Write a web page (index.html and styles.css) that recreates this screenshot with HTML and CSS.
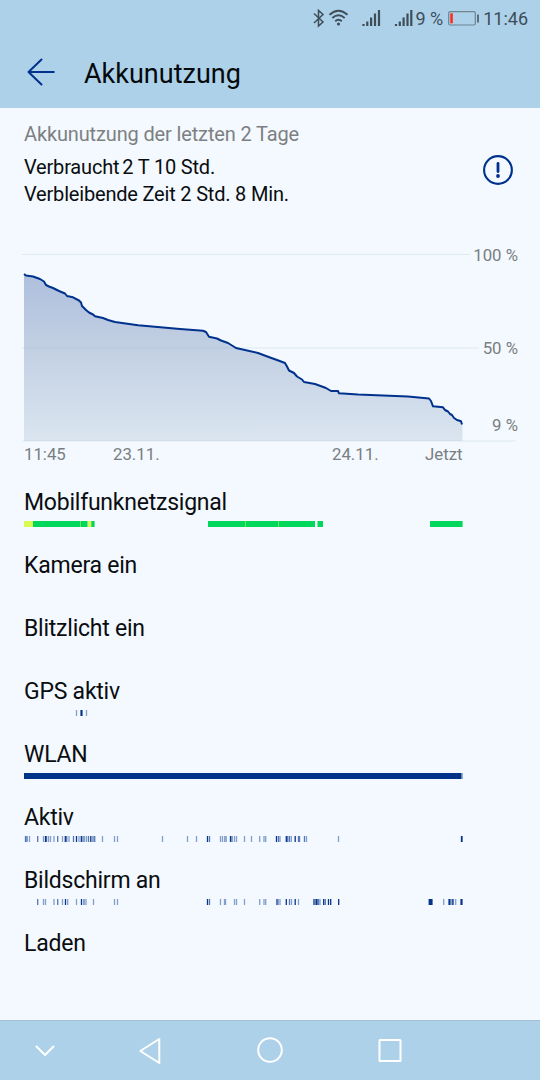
FILE: index.html
```html
<!DOCTYPE html>
<html lang="de">
<head>
<meta charset="utf-8">
<title>Akkunutzung</title>
<link rel="stylesheet" href="styles.css">
</head>
<body>
<header class="top">
  <div class="status">
    <svg class="status-icons" width="102" height="24" viewBox="312 6 102 24">
      <path class="ink" d="M314 13.5l9 8.5-4.5 4V10.5l4.5 4-9 8.5"/>
      <g class="ink wifi"><path d="M329.5 14.8q9-8 18 0"/><path d="M332.3 18q6.2-5.4 12.4 0"/><path d="M335.2 21.2q3.3-2.8 6.6 0"/></g>
      <circle class="ink-fill" cx="338.5" cy="24" r="1.6"/>
      <path class="ink bars" d="M363.5 24v2M367.3 21.5v4.500M371.1 17.500v8.500M375 13.500v12.500M379 10v16"/>
      <path class="ink bars" d="M396 24v2M399.8 21.500v4.500M403.600 17.500v8.500M407.500 13.500v12.500M411.300 10v16"/>
    </svg>
    <span class="charge">9 %</span>
    <svg class="battery" width="31" height="16" viewBox="0 0 31 16">
      <rect class="battery-case" x=".7" y="1.700" width="26.600" height="13.300" rx="1.500"/>
      <path class="battery-level" d="M2.300 3.300h2.500v10h-2.500z"/>
      <path class="ink" d="M30 4.500v8"/>
    </svg>
    <span>11:46</span>
  </div>
  <div class="appbar">
    <svg width="30" height="30" viewBox="0 0 30 30"><path class="back" d="M15.500 2.500L2.500 15l13 12.500M2.500 15h25.300"/></svg>
    <h1>Akkunutzung</h1>
  </div>
</header>
<main>
  <section class="summary">
    <div>
      <p class="caption">Akkunutzung der letzten 2 Tage</p>
      <p class="fact"><span class="used">Verbraucht</span>2 T 10 Std.</p>
      <p class="fact">Verbleibende Zeit 2 Std. 8 Min.</p>
    </div>
    <svg class="info" width="32" height="32" viewBox="0 0 32 32"><circle cx="16" cy="16" r="13.900"/><path d="M16 9.500v8"/><circle class="dot" cx="16" cy="22" r="1.900"/></svg>
  </section>
  <section class="chart">
    <svg class="plot" width="500" height="200" viewBox="20 246 500 200">
      <defs><linearGradient id="fade" x1="0" y1="0" x2="0" y2="1"><stop offset="0" stop-color="#aebfdd"/><stop offset=".5" stop-color="#c5d2e4"/><stop offset="1" stop-color="#dae5f0"/></linearGradient></defs>
      <path class="area" d="M24 441V274.500L33 277 40 279.500 44 281.500 46 285 53 288 61 292 65 294 67 296 73 297.300 80 302 82 306.500 86 310 89 312.500 95 316.300 103 318 115 322 138 325.200 180 329 203 330.800 206 332 209 336.800 217 338.500 228 343 236 348 258 353 270 357.500 285 363 290 371 294 373 298 377.300 304 382 315 384 326 388 331 391 338 391 339 393.300 358 394.500 408 396.500 429 398.500 431 401 433 406.300 443 407.300 445 410 448 411.500 454 418 461 421.300 462.500 425V441z"/>
      <path class="grid" d="M22 254.500H470M22 348H479M22 441H516"/>
      <path class="curve" d="M24 274L26 275.500 33 276.500 40 279 44 281.500 46 285 49 286.500 53 288 59 291 65 293.500 67 296 73 297.300 79 300.500 81 302.500 82 306 86 310 89 312.500 93 314.500 95 316.300 103 318 108 320 115 322 138 325.200 180 329 203 330.800 206 332 209 336.800 217 338.500 221 340.500 228 343 236 348 258 353 270 357.500 277 360 285 363 287 366.500 289 370.500 294 373 297 376.500 302 379.500 304 382 315 384 326 388 331 391 338 391 339 393.300 358 394.500 408 396.500 429 398.500 431 401 433 406.300 443 407.300 445 410 448 411.500 450 414 452 415 454 418 457 420 461 421.300 462 424.500"/>
      <g class="axis"><g text-anchor="end"><text x="518" y="260.500">100 %</text><text x="518" y="354">50 %</text><text x="518" y="430.500">9 %</text></g></g>
    </svg>
    <div class="dates"><span>11:45</span><span>23.11.</span><span>24.11.</span><span>Jetzt</span></div>
  </section>
  <section class="rows">
    <div class="row"><h2>Mobilfunknetzsignal</h2>
      <svg class="strip" viewBox="24 0 439 6"><path fill="#d9fa50" d="M24 0h9v6h-9zM87.500 0h4v6h-4z"/><path fill="#6be654" d="M80 0h1v6h-1zM245 0h1v6h-1zM278 0h1v6h-1z"/><path fill="#00d75b" d="M33 0h47v6H33zM81 0h6.500v6H81zM91.300 0h3.300v6h-3.300zM208 0h37v6h-37zM246 0h32v6h-32zM279 0h36v6h-36zM317.500 0h5.500v6h-5.500zM430 0h32.600v6H430z"/></svg></div>
    <div class="row"><h2>Kamera ein</h2></div>
    <div class="row"><h2>Blitzlicht ein</h2></div>
    <div class="row"><h2>GPS aktiv</h2>
      <svg class="strip" viewBox="24 0 439 6"><path class="tick light" d="M76.500 0v6M86.500 0v6"/><path class="tick wide" d="M81.500 0v6"/></svg></div>
    <div class="row"><h2>WLAN</h2>
      <svg class="strip" viewBox="24 0 439 6"><path fill="#003289" d="M24 0h437v6H24z"/><path fill="#36589d" d="M461.300 0h1.200v6h-1.200z"/></svg></div>
    <div class="row"><h2>Aktiv</h2>
      <svg class="strip" viewBox="24 0 439 6">
        <path class="tick light" d="M29.500 0v6M43.500 0v6M48.500 0v6M50.500 0v6M54 0v6M62.500 0v6M69 0v6M79 0v6M84.500 0v6M86.500 0v6M102.500 0v6M114.500 0v6M117.500 0v6M162.500 0v6M187.500 0v6M196.500 0v6M220.500 0v6M222.500 0v6M224.700 0v6M226.200 0v6M234.500 0v6M236.500 0v6M244.500 0v6M251.500 0v6M259.700 0v6M264 0v6M265.700 0v6M280 0v6M291.300 0v6M306.500 0v6M338.500 0v6"/>
        <path class="tick mid" d="M25.500 0v6M27 0v6M37.700 0v6M46.500 0v6M57.700 0v6M66.700 0v6M73.500 0v6M83 0v6M88.500 0v6M93 0v6M94.700 0v6M209.500 0v6M232 0v6M278.500 0v6M287.700 0v6M289.500 0v6M298.500 0v6M299.500 0v6M304.500 0v6"/>
        <path class="tick" d="M45.500 0v6M65.300 0v6M76.500 0v6M81.300 0v6M90.800 0v6M207.500 0v6M230.500 0v6M276.500 0v6M286.300 0v6M295.200 0v6M461.500 0v6M462 0v6"/>
      </svg></div>
    <div class="row"><h2>Bildschirm an</h2>
      <svg class="strip" viewBox="24 0 439 6">
        <path class="tick light" d="M43.500 0v6M45.500 0v6M54 0v6M62.500 0v6M67.700 0v6M76.500 0v6M86 0v6M93.500 0v6M114.500 0v6M117.500 0v6M220.500 0v6M224.500 0v6M225.500 0v6M234.500 0v6M236.500 0v6M244.500 0v6M259.700 0v6M264 0v6M265.700 0v6M280 0v6M291.500 0v6M298.500 0v6M320 0v6M443.700 0v6M455.700 0v6"/>
        <path class="tick mid" d="M37.700 0v6M57.700 0v6M84 0v6M209.500 0v6M276.700 0v6M278 0v6M289.500 0v6M318.500 0v6M325.300 0v6M452 0v6"/>
        <path class="tick" d="M65.500 0v6M81.500 0v6M207.500 0v6M286.300 0v6M295.200 0v6M314 0v6M323.700 0v6M328.500 0v6M330.700 0v6M338.700 0v6M453 0v6"/>
        <path class="tick wide" d="M316.500 0v6M429.700 0v6M431.500 0v6M449.500 0v6M461.500 0v6"/>
      </svg></div>
    <div class="row"><h2>Laden</h2></div>
  </section>
</main>
<nav>
  <svg width="540" height="59" viewBox="0 1021.5 540 59"><path d="M36.500 1047l8.500 8.500 8.500-8.500"/><path d="M159.300 1039.500v24l-19-12z"/><circle cx="270" cy="1050.500" r="11.800"/><rect x="379.500" y="1040.500" width="21" height="21" rx=".5"/></svg>
</nav>
</body>
</html>
```
FILE: styles.css
```css
* { box-sizing: border-box; }
body { margin: 0; width: 540px; height: 1080px; display: flex; flex-direction: column; overflow: hidden; background: #f3f9fe; color: #0a0d10; font-family: Roboto, sans-serif; }
svg { display: block; flex: none; }
h1, h2, p { margin: 0; font-weight: 400; white-space: nowrap; }
.top { height: 108px; flex: none; background: #add1e9; }
.status { height: 36px; display: flex; align-items: center; justify-content: flex-end; padding: 0 12px 0 0; font-size: 18px; color: #3e4e59; }
.charge { margin: 0 5px 0 1px; white-space: nowrap; }
.battery { margin-right: 4px; }
.ink { fill: none; stroke: #3e4e59; stroke-width: 1.5; }
.wifi { stroke-width: 1.9; }
.bars { stroke-width: 2.2; }
.ink-fill { fill: #3e4e59; }
.battery-case { fill: none; stroke: #6d8492; stroke-width: 1.2; }
.battery-level { fill: #ff2a16; }
.appbar { height: 72px; display: flex; align-items: center; padding-left: 26px; gap: 28px; }
.appbar h1 { font-size: 27px; line-height: 34px; padding-top: 3px; color: #05090c; }
.back { fill: none; stroke: #00318c; stroke-width: 2; stroke-linecap: round; stroke-linejoin: round; }
main { flex: 1; }
.summary { height: 138px; padding: 13px 26px 0 24px; display: flex; justify-content: space-between; }
.caption { font-size: 20px; letter-spacing: -.14px; line-height: 27px; color: #7d8082; margin-bottom: 6px; }
.fact { font-size: 20px; letter-spacing: -.19px; line-height: 26.500px; }
.used { margin-right: 3px; }
.info { margin: 33px 0 0; fill: none; stroke: #00318c; stroke-width: 2.1; stroke-linecap: round; }
.info path { stroke-width: 2.8; }
.info .dot { fill: #00318c; stroke: none; }
.chart { height: 238px; }
.plot { margin-left: 20px; }
.area { fill: url(#fade); }
.grid { fill: none; stroke: #8ca6bc; stroke-opacity: .18; stroke-width: 1.2; }
.curve { fill: none; stroke: #00318c; stroke-width: 2; stroke-linejoin: round; }
.axis { font-size: 16.800px; fill: #7a7e81; }
.dates { display: grid; grid-template-columns: 89px 219px 93px 1fr; margin-top: -1px; padding-left: 24px; font-size: 16.800px; line-height: 19px; color: #7a7e81; }
.row { height: 63px; padding-left: 24px; }
.row h2 { font-size: 23px; letter-spacing: -.23px; line-height: 30px; height: 37px; padding-top: 4px; }
.strip { width: 439px; height: 6px; }
.tick { stroke: #063488; stroke-width: 1.3; }
.light { stroke: #829ecb; }
.mid { stroke: #5577b8; }
.wide { stroke-width: 2.2; }
nav { height: 60px; flex: none; border-top: 1px solid #a2bfd4; background: #add1e9; }
nav svg { fill: none; stroke: #fff; stroke-width: 2; stroke-linejoin: round; stroke-linecap: round; }
```
